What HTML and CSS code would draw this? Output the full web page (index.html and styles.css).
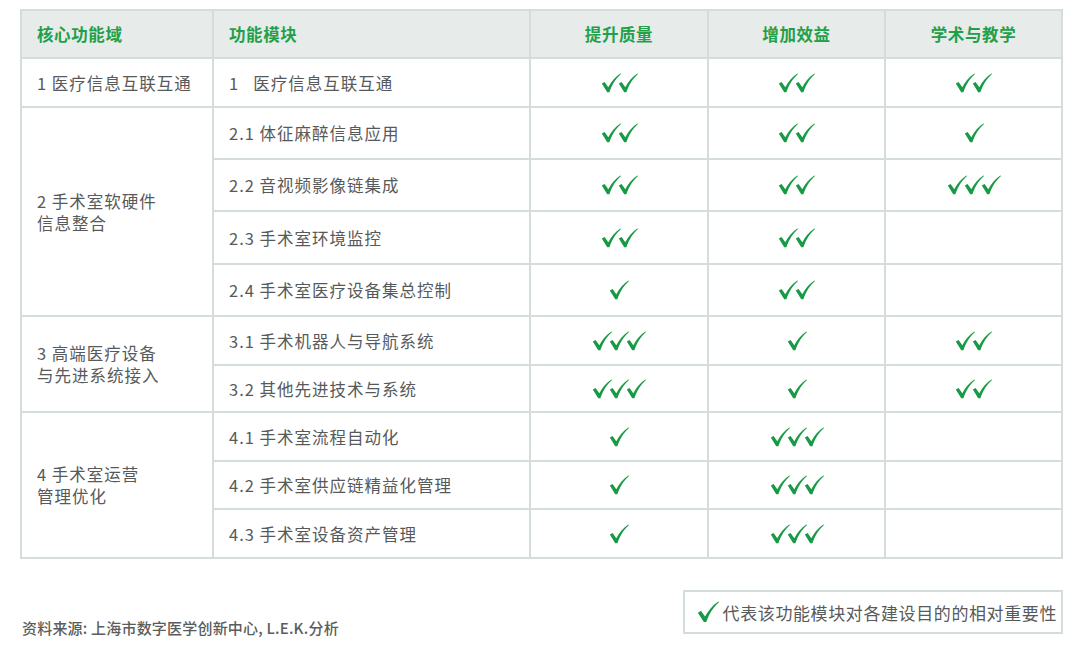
FILE: index.html
```html
<!DOCTYPE html>
<html lang="zh-CN">
<head>
<meta charset="utf-8">
<title>手术室功能模块</title>
<link rel="stylesheet" href="styles.css">
</head>
<body>
<svg width="0" height="0" class="defs">
  <defs>
    <symbol id="ck" viewBox="0 0 20 20">
      <path d="M0.8,10.6 L3.6,8.9 L7.3,14.2 C10.2,8.6 14.3,3.8 19.4,0.4 L20,1.1 C15.2,5.3 11.2,11 8.4,19.2 L6.2,19.2 Z"/>
    </symbol>
  </defs>
</svg>
<div class="grid">
  <div class="cell head">核心功能域</div>
  <div class="cell head">功能模块</div>
  <div class="cell head c">提升质量</div>
  <div class="cell head c">增加效益</div>
  <div class="cell head c">学术与教学</div>

  <div class="cell r1">1 医疗信息互联互通</div>
  <div class="cell r1">1&nbsp;&nbsp;&nbsp;医疗信息互联互通</div>
  <div class="cell c r1"><span class="ck n2"><svg><use href="#ck"/></svg><svg><use href="#ck"/></svg></span></div>
  <div class="cell c r1"><span class="ck n2"><svg><use href="#ck"/></svg><svg><use href="#ck"/></svg></span></div>
  <div class="cell c r1"><span class="ck n2"><svg><use href="#ck"/></svg><svg><use href="#ck"/></svg></span></div>

  <div class="cell span4"><div class="lines"><div class="ln">2 手术室软硬件</div><div class="ln">信息整合</div></div></div>
  <div class="cell">2.1 体征麻醉信息应用</div>
  <div class="cell c"><span class="ck"><svg><use href="#ck"/></svg><svg><use href="#ck"/></svg></span></div>
  <div class="cell c"><span class="ck"><svg><use href="#ck"/></svg><svg><use href="#ck"/></svg></span></div>
  <div class="cell c"><span class="ck"><svg><use href="#ck"/></svg></span></div>

  <div class="cell">2.2 音视频影像链集成</div>
  <div class="cell c"><span class="ck"><svg><use href="#ck"/></svg><svg><use href="#ck"/></svg></span></div>
  <div class="cell c"><span class="ck"><svg><use href="#ck"/></svg><svg><use href="#ck"/></svg></span></div>
  <div class="cell c"><span class="ck"><svg><use href="#ck"/></svg><svg><use href="#ck"/></svg><svg><use href="#ck"/></svg></span></div>

  <div class="cell">2.3 手术室环境监控</div>
  <div class="cell c"><span class="ck"><svg><use href="#ck"/></svg><svg><use href="#ck"/></svg></span></div>
  <div class="cell c"><span class="ck"><svg><use href="#ck"/></svg><svg><use href="#ck"/></svg></span></div>
  <div class="cell c"></div>

  <div class="cell">2.4 手术室医疗设备集总控制</div>
  <div class="cell c"><span class="ck"><svg><use href="#ck"/></svg></span></div>
  <div class="cell c"><span class="ck"><svg><use href="#ck"/></svg><svg><use href="#ck"/></svg></span></div>
  <div class="cell c"></div>

  <div class="cell span2"><div class="lines"><div class="ln">3 高端医疗设备</div><div class="ln">与先进系统接入</div></div></div>
  <div class="cell">3.1 手术机器人与导航系统</div>
  <div class="cell c"><span class="ck"><svg><use href="#ck"/></svg><svg><use href="#ck"/></svg><svg><use href="#ck"/></svg></span></div>
  <div class="cell c"><span class="ck"><svg><use href="#ck"/></svg></span></div>
  <div class="cell c"><span class="ck"><svg><use href="#ck"/></svg><svg><use href="#ck"/></svg></span></div>

  <div class="cell">3.2 其他先进技术与系统</div>
  <div class="cell c"><span class="ck"><svg><use href="#ck"/></svg><svg><use href="#ck"/></svg><svg><use href="#ck"/></svg></span></div>
  <div class="cell c"><span class="ck"><svg><use href="#ck"/></svg></span></div>
  <div class="cell c"><span class="ck"><svg><use href="#ck"/></svg><svg><use href="#ck"/></svg></span></div>

  <div class="cell span3"><div class="lines"><div class="ln">4 手术室运营</div><div class="ln">管理优化</div></div></div>
  <div class="cell">4.1 手术室流程自动化</div>
  <div class="cell c"><span class="ck"><svg><use href="#ck"/></svg></span></div>
  <div class="cell c"><span class="ck"><svg><use href="#ck"/></svg><svg><use href="#ck"/></svg><svg><use href="#ck"/></svg></span></div>
  <div class="cell c"></div>

  <div class="cell">4.2 手术室供应链精益化管理</div>
  <div class="cell c"><span class="ck"><svg><use href="#ck"/></svg></span></div>
  <div class="cell c"><span class="ck"><svg><use href="#ck"/></svg><svg><use href="#ck"/></svg><svg><use href="#ck"/></svg></span></div>
  <div class="cell c"></div>

  <div class="cell">4.3 手术室设备资产管理</div>
  <div class="cell c"><span class="ck"><svg><use href="#ck"/></svg></span></div>
  <div class="cell c"><span class="ck"><svg><use href="#ck"/></svg><svg><use href="#ck"/></svg><svg><use href="#ck"/></svg></span></div>
  <div class="cell c"></div>
</div>

<div class="footer">
  <div class="source">资料来源: 上海市数字医学创新中心, L.E.K.分析</div>
  <div class="legend"><span class="ck lg"><svg><use href="#ck"/></svg></span>代表该功能模块对各建设目的的相对重要性</div>
</div>
</body>
</html>
```

FILE: styles.css
```css
html, body {
  margin: 0;
  background: #ffffff;
}
body {
  padding: 9px 17px 0 20px;
  font-family: "Noto Sans CJK SC", "Noto Sans", sans-serif;
  color: #575a5a;
}
.defs {
  position: absolute;
  width: 0;
  height: 0;
  overflow: hidden;
}
.grid {
  width: 1043px;
  box-sizing: border-box;
  display: grid;
  grid-template-columns: 190px 315px 176px 175px 175px;
  grid-template-rows: 46px 47px 50px 50px 51px 50px 47px 45px 47px 46px 47px;
  gap: 2px;
  padding: 2px;
  background: #d5dddb;
}
.cell {
  background: #ffffff;
  display: flex;
  align-items: center;
  padding-left: 15px;
  font-size: 16.5px;
  letter-spacing: 1px;
  line-height: 20px;
  color: #575a5a;
}
.lines {
  display: flex;
  flex-direction: column;
}
.ln {
  height: 22px;
  line-height: 22px;
  font-size: 16.5px;
}
.cell.c {
  justify-content: center;
  padding-left: 0;
}
.head {
  background: #e7ebea;
  color: #22a048;
  font-weight: 700;
  letter-spacing: 0.6px;
}
.span4 { grid-row: span 4; }
.span3 { grid-row: span 3; }
.span2 { grid-row: span 2; }
.ck {
  display: inline-flex;
  align-items: center;
  fill: #179a45;
}
.ck svg {
  width: 20px;
  height: 20px;
  margin-left: -3px;
}
.ck svg:first-child {
  margin-left: 0;
}
.footer {
  width: 1043px;
  display: flex;
  justify-content: space-between;
  align-items: flex-start;
  margin-top: 31px;
}
.source {
  margin-left: 2px;
  margin-top: 28px;
  font-size: 15px;
  font-weight: 500;
  color: #5a5d5d;
  line-height: 20px;
  letter-spacing: 0.2px;
}
.legend {
  display: flex;
  align-items: center;
  border: 2px solid #d5dddb;
  height: 44px;
  box-sizing: border-box;
  padding: 0 4px 0 12px;
  font-size: 17px;
  letter-spacing: 0.6px;
  color: #575a5a;
}
.ck.lg svg {
  width: 22px;
  height: 22px;
  margin-right: 4px;
}
```
